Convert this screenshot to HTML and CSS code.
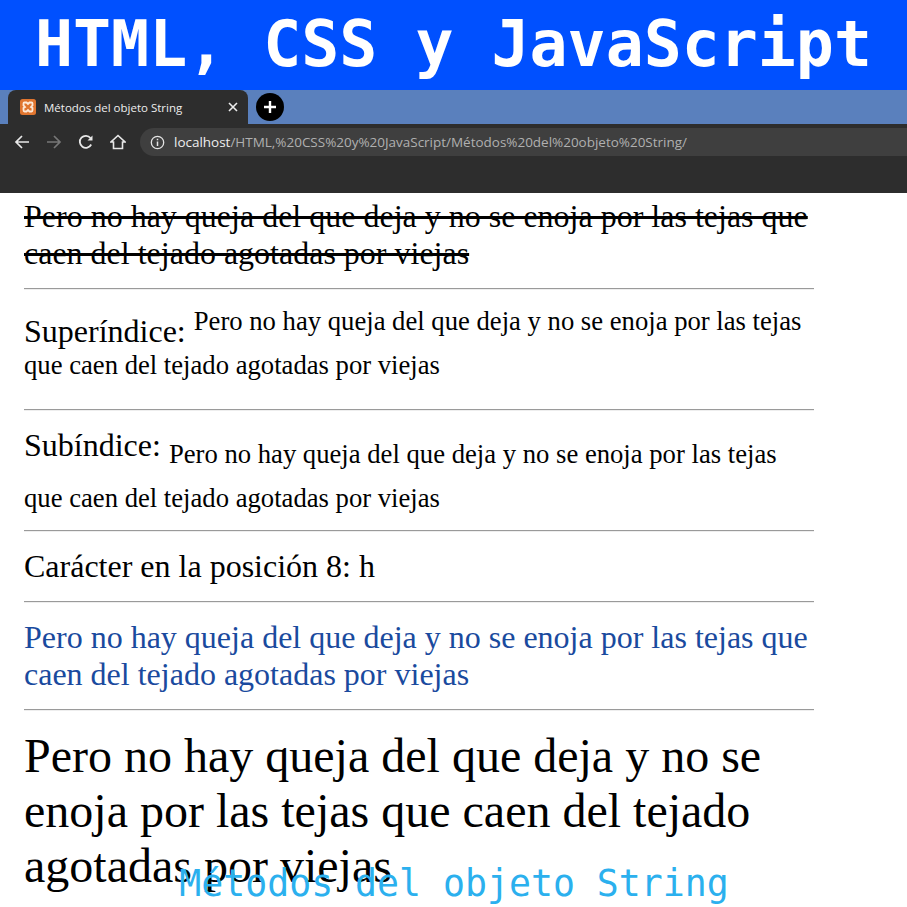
FILE: index.html
```html
<!DOCTYPE html>
<html lang="es">
<head>
  <meta charset="UTF-8">
  <meta name="viewport" content="width=device-width, initial-scale=1.0">
  <title>Métodos del objeto String</title>
  <link rel="stylesheet" href="styles.css">
</head>
<body>
  <header class="banner">HTML, CSS y JavaScript</header>

  <div class="browser">
    <div class="tabstrip">
      <div class="tab">
        <svg class="favicon" width="16" height="16" viewBox="0 0 16 16">
          <rect width="16" height="16" rx="2.500" fill="#e0752f"/>
          <path d="M4.500 3.500h2L8 5l1.500-1.500h2q1 0 1 1v2L11 8l1.500 1v2q0 1.500-1 1.500h-2L8 11l-1.500 1.500h-2q-1 0-1-1.500V9L5 8 3.500 6.500v-2q0-1 1-1z" fill="none" stroke="#fde9d8" stroke-width="1.800"/>
        </svg>
        <span class="tab-title">Métodos del objeto String</span>
        <svg class="tab-close" width="10" height="10" viewBox="0 0 10 10">
          <path d="M1 1l8 8M9 1l-8 8" stroke="#eee" stroke-width="1.600"/>
        </svg>
      </div>
      <div class="new-tab">
        <svg width="14" height="14" viewBox="0 0 14 14">
          <path d="M7 1v12M1 7h12" stroke="#fff" stroke-width="2.400"/>
        </svg>
      </div>
    </div>
    <div class="toolbar">
      <svg class="nav-icon" width="16" height="16" viewBox="0 0 16 16">
        <path d="M15 8H2M8 2L2 8l6 6" fill="none" stroke="#e8e8e8" stroke-width="1.700"/>
      </svg>
      <svg class="nav-icon" width="16" height="16" viewBox="0 0 16 16">
        <path d="M1 8h13M8 2l6 6-6 6" fill="none" stroke="#777" stroke-width="1.700"/>
      </svg>
      <svg class="nav-icon" width="16" height="16" viewBox="0 0 16 16">
        <path d="M13.200 10.500A6 6 0 1 1 12.500 4" fill="none" stroke="#e8e8e8" stroke-width="1.800"/>
        <path d="M14.500 1.500v5h-5z" fill="#e8e8e8"/>
      </svg>
      <svg class="nav-icon" width="16" height="16" viewBox="0 0 16 16">
        <path d="M8 1.500L1 8h2.500v6.500h9V8H15z" fill="none" stroke="#e8e8e8" stroke-width="1.600"/>
      </svg>
      <div class="omnibox">
        <svg width="15" height="15" viewBox="0 0 15 15">
          <circle cx="7.500" cy="7.500" r="6.200" fill="none" stroke="#e4e4e4" stroke-width="1.300"/>
          <path d="M7.500 6.500v4.500M7.500 3.700v1.600" stroke="#e4e4e4" stroke-width="1.500"/>
        </svg>
        <span class="url"><span class="host">localhost</span>/HTML,%20CSS%20y%20JavaScript/Métodos%20del%20objeto%20String/</span>
      </div>
    </div>
  </div>

  <main class="content">
    <p class="line"><strike>Pero no hay queja del que deja y no se enoja por las tejas que caen del tejado agotadas por viejas</strike></p>
    <hr>
    <p class="line">Superíndice: <sup>Pero no hay queja del que deja y no se enoja por las tejas que caen del tejado agotadas por viejas</sup></p>
    <hr>
    <p class="line">Subíndice: <sub>Pero no hay queja del que deja y no se enoja por las tejas que caen del tejado agotadas por viejas</sub></p>
    <hr>
    <p class="line">Carácter en la posición 8: h</p>
    <hr>
    <p class="line blue">Pero no hay queja del que deja y no se enoja por las tejas que caen del tejado agotadas por viejas</p>
    <hr>
    <p class="big">Pero no hay queja del que deja y no se enoja por las tejas que caen del tejado agotadas por viejas</p>
  </main>

  <div class="caption">Métodos del objeto String</div>
</body>
</html>
```

FILE: styles.css
```css
html, body {
  height: 907px;
  overflow: hidden;
}
body {
  margin: 0;
  padding: 0;
  background-color: #fff;
  font-family: "Liberation Serif", serif;
  color: #000;
  position: relative;
}
.banner {
  height: 90px;
  background-color: #0050ff;
  color: #fff;
  font-family: "DejaVu Sans Mono", monospace;
  font-weight: bold;
  font-size: 63.200px;
  line-height: 88px;
  text-align: center;
  white-space: nowrap;
}
.browser {
  height: 103px;
  background-color: #2d2d2d;
  font-family: "Open Sans", "Liberation Sans", sans-serif;
}
.tabstrip {
  height: 34px;
  background-color: #5a80bd;
  display: flex;
  align-items: flex-end;
  padding-left: 8px;
  gap: 8px;
}
.tab {
  width: 240px;
  height: 34px;
  box-sizing: border-box;
  background-color: #2d2d2d;
  border-radius: 8px 8px 0 0;
  display: flex;
  align-items: center;
  padding: 0 10px 0 12px;
  color: #eee;
}
.favicon {
  flex: none;
}
.tab-title {
  flex: 1;
  margin-left: 8px;
  font-size: 11.500px;
  white-space: nowrap;
}
.new-tab {
  width: 28px;
  height: 28px;
  margin-bottom: 3px;
  border-radius: 50%;
  background-color: #000;
  display: flex;
  align-items: center;
  justify-content: center;
}
.toolbar {
  height: 36px;
  display: flex;
  align-items: center;
  padding-left: 14px;
}
.nav-icon {
  flex: none;
  margin-right: 16px;
}
.omnibox {
  flex: 1;
  height: 28px;
  margin-left: -2px;
  background-color: #3f3f3f;
  border-radius: 14px 0 0 14px;
  display: flex;
  align-items: center;
  padding-left: 10px;
  gap: 9px;
}
.url {
  font-size: 13.480px;
  color: #b0b0b0;
  white-space: nowrap;
}
.host {
  color: #eee;
}
.content {
  padding: 5px 93px 0 24px;
}
.line {
  margin: 0;
  font-size: 32px;
}
.blue {
  color: #1a4a9e;
}
.big {
  margin: 0;
  padding-top: 1px;
  font-size: 48px;
}
hr {
  margin: 16px 0;
  border: none;
  border-top: 1px solid #9a9a9a;
  border-bottom: 1px solid #eee;
}
.caption {
  position: absolute;
  left: 1px;
  right: 0;
  top: 862px;
  text-align: center;
  font-family: "DejaVu Sans Mono", monospace;
  font-size: 36.500px;
  line-height: 44px;
  color: #2bb0ee;
  white-space: nowrap;
}
```
